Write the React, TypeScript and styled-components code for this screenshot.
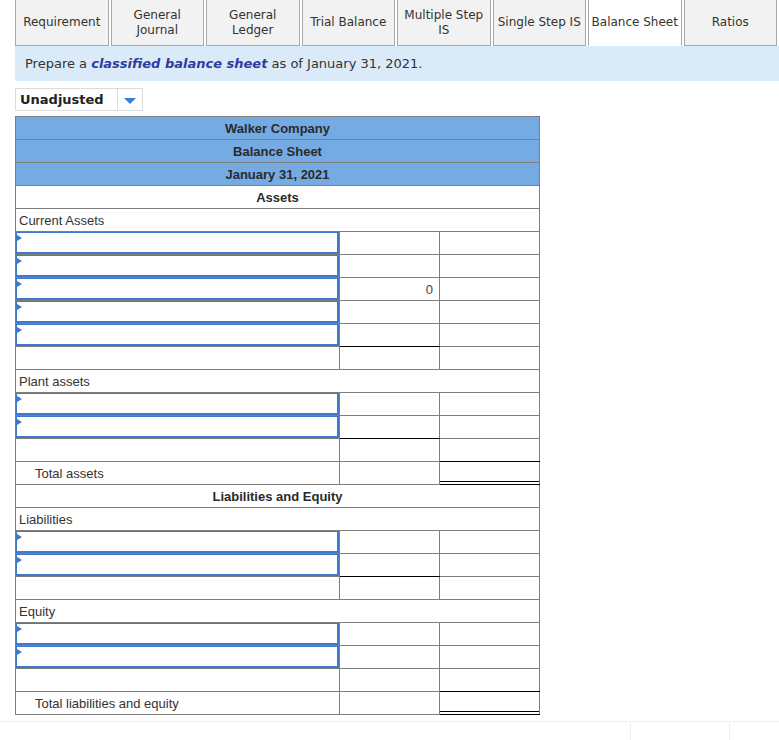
import React from 'react';
import styled, {createGlobalStyle} from 'styled-components';

const GlobalStyle = createGlobalStyle`
  body {
    margin: 0;
    background: #fff;
    font-family: "DejaVu Sans", Verdana, sans-serif;
    color: #333;
  }
`;

const Page = styled.div`
  padding-left: 15px;
  width: 764px;
`;

const TabBar = styled.div`
  display: flex;
  gap: 2px;
  height: 46px;
  margin-right: 2px;
`;

const Tab = styled.div<{$active?: boolean}>`
  flex: 1;
  display: flex;
  align-items: center;
  justify-content: center;
  text-align: center;
  white-space: pre-line;
  font-size: 12px;
  line-height: 15px;
  color: #333;
  background: ${p => (p.$active ? '#fff' : '#f2f2f2')};
  border: 1px solid #a8a8a8;
  border-top: none;
  border-bottom-color: ${p => (p.$active ? '#fff' : '#a8a8a8')};
`;

const Instructions = styled.div`
  height: 35px;
  display: flex;
  align-items: center;
  padding-left: 10px;
  background: #dbeaf8;
  font-size: 13px;
  color: #333;
`;

const Emph = styled.span`
  font-weight: bold;
  font-style: italic;
  color: #2f3d9e;
`;

const SelectBox = styled.div`
  margin-top: 7px;
  width: 128px;
  height: 23px;
  box-sizing: border-box;
  border: 1px solid #dcdcdc;
  display: flex;
`;

const SelectLabel = styled.div`
  flex: 1;
  display: flex;
  align-items: center;
  padding-left: 4px;
  font-size: 13px;
  font-weight: bold;
  color: #222;
`;

const SelectArrow = styled.div`
  width: 24px;
  border-left: 1px solid #dcdcdc;
  display: flex;
  align-items: center;
  justify-content: center;
  &::after {
    content: '';
    border-left: 6px solid transparent;
    border-right: 6px solid transparent;
    border-top: 6px solid #3d7fd6;
    margin-top: 2px;
  }
`;

const Sheet = styled.table`
  margin-top: 5px;
  width: 525px;
  border-collapse: collapse;
  table-layout: fixed;
  font-family: "Liberation Sans", Arial, sans-serif;
  font-size: 13px;
  color: #333;
`;

type Rule = 'single' | 'double' | undefined;

const Cell = styled.td<{$rule?: Rule}>`
  height: 22px;
  padding: 0;
  border: 1px solid #7f7f7f;
  ${p => p.$rule && 'border-bottom: 1px solid #000;'}
  ${p => p.$rule === 'double' && 'box-shadow: inset 0 -2px 0 #fff, inset 0 -3px 0 #000;'}
  vertical-align: middle;
`;

const TitleCell = styled(Cell)<{$blue?: boolean}>`
  text-align: center;
  font-weight: bold;
  background: ${p => (p.$blue ? '#75aae3' : '#fff')};
  color: #2a2a2a;
`;

const LabelCell = styled(Cell)<{$indent?: boolean}>`
  padding-left: ${p => (p.$indent ? '19px' : '3px')};
`;

const ValueCell = styled(Cell)`
  text-align: right;
  padding-right: 6px;
  color: #444;
`;

const InputCell = styled(Cell)`
  padding: 0;
`;

const InputBox = styled.div`
  position: relative;
  height: 22px;
  box-sizing: border-box;
  border: 1px solid #4079c7;
  border-bottom-width: 2px;
  border-right-width: 2px;
  &::before {
    content: '';
    position: absolute;
    left: 0;
    top: 2px;
    border-top: 3px solid transparent;
    border-bottom: 3px solid transparent;
    border-left: 5px solid #3d78c9;
  }
`;

const Footer = styled.div`
  margin-top: 6px;
  margin-left: -15px;
  width: 779px;
  height: 20px;
  border-top: 1px solid #efefef;
  display: flex;
  justify-content: flex-end;
`;

const FooterCell = styled.div<{$w: number}>`
  width: ${p => p.$w}px;
  border-left: 1px solid #efefef;
`;

const tabs = [
  'Requirement',
  'General\nJournal',
  'General\nLedger',
  'Trial Balance',
  'Multiple Step\nIS',
  'Single Step IS',
  'Balance Sheet',
  'Ratios',
];

type Row =
  | {kind: 'title'; text: string; blue?: boolean}
  | {kind: 'label'; text: string}
  | {kind: 'input'; value?: string; rule2?: Rule}
  | {kind: 'blank'; rule3?: Rule}
  | {kind: 'total'; text: string};

const rows: Row[] = [
  {kind: 'title', text: 'Walker Company', blue: true},
  {kind: 'title', text: 'Balance Sheet', blue: true},
  {kind: 'title', text: 'January 31, 2021', blue: true},
  {kind: 'title', text: 'Assets'},
  {kind: 'label', text: 'Current Assets'},
  {kind: 'input'},
  {kind: 'input'},
  {kind: 'input', value: '0'},
  {kind: 'input'},
  {kind: 'input', rule2: 'single'},
  {kind: 'blank'},
  {kind: 'label', text: 'Plant assets'},
  {kind: 'input'},
  {kind: 'input', rule2: 'single'},
  {kind: 'blank', rule3: 'single'},
  {kind: 'total', text: 'Total assets'},
  {kind: 'title', text: 'Liabilities and Equity'},
  {kind: 'label', text: 'Liabilities'},
  {kind: 'input'},
  {kind: 'input', rule2: 'single'},
  {kind: 'blank'},
  {kind: 'label', text: 'Equity'},
  {kind: 'input'},
  {kind: 'input'},
  {kind: 'blank', rule3: 'single'},
  {kind: 'total', text: 'Total liabilities and equity'},
];

function SheetRow({row}: {row: Row}) {
  switch (row.kind) {
    case 'title':
      return (
        <tr>
          <TitleCell colSpan={3} $blue={row.blue}>
            {row.text}
          </TitleCell>
        </tr>
      );
    case 'label':
      return (
        <tr>
          <LabelCell colSpan={3}>{row.text}</LabelCell>
        </tr>
      );
    case 'input':
      return (
        <tr>
          <InputCell>
            <InputBox />
          </InputCell>
          <ValueCell $rule={row.rule2}>{row.value}</ValueCell>
          <Cell />
        </tr>
      );
    case 'blank':
      return (
        <tr>
          <Cell />
          <Cell />
          <Cell $rule={row.rule3} />
        </tr>
      );
    case 'total':
      return (
        <tr>
          <LabelCell $indent>{row.text}</LabelCell>
          <Cell />
          <Cell $rule="double" />
        </tr>
      );
  }
}

export default function App() {
  return (
    <>
      <GlobalStyle />
      <Page>
        <TabBar>
          {tabs.map(t => (
            <Tab key={t} $active={t === 'Balance Sheet'}>
              {t}
            </Tab>
          ))}
        </TabBar>
        <Instructions>
          Prepare a&nbsp;<Emph>classified balance sheet</Emph>&nbsp;as of January 31, 2021.
        </Instructions>
        <SelectBox>
          <SelectLabel>Unadjusted</SelectLabel>
          <SelectArrow />
        </SelectBox>
        <Sheet>
          <colgroup>
            <col style={{width: 324}} />
            <col style={{width: 100}} />
            <col style={{width: 100}} />
          </colgroup>
          <tbody>
            {rows.map((r, i) => (
              <SheetRow key={i} row={r} />
            ))}
          </tbody>
        </Sheet>
        <Footer>
          <FooterCell $w={98} />
          <FooterCell $w={49} />
        </Footer>
      </Page>
    </>
  );
}
